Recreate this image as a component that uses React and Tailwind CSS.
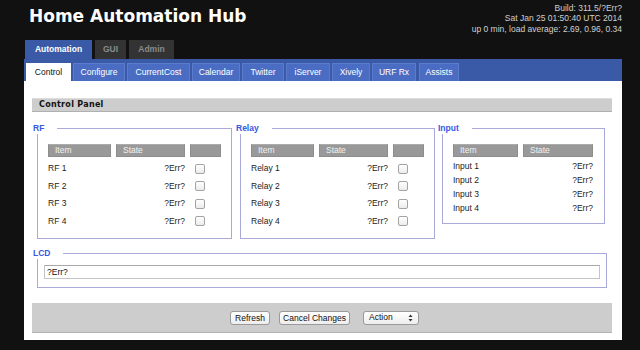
import React from "react";

const topTabs = [
  { label: "Automation", w: "w-[67px]", active: true },
  { label: "GUI", w: "w-[31px]" },
  { label: "Admin", w: "w-[45px]" },
];

const subTabs = [
  { label: "Control", w: "w-[45px]", active: true },
  { label: "Configure", w: "w-[52px]" },
  { label: "CurrentCost", w: "w-[63px]" },
  { label: "Calendar", w: "w-[48px]" },
  { label: "Twitter", w: "w-[42px]" },
  { label: "iServer", w: "w-[44px]" },
  { label: "Xively", w: "w-[38px]" },
  { label: "URF Rx", w: "w-[44px]" },
  { label: "Assists", w: "w-[40px]", ml: "ml-[1px]" },
];

const Checkbox = () => (
  <span className="block h-[10px] w-[10px] rounded-[2px] border border-[#a3a3a3] bg-gradient-to-b from-white to-[#ececec]" />
);

const HeadCell = ({ children }) => (
  <div className="h-[13px] border border-[#8d8d8d] border-t-[#ababab] bg-[#999] pl-[6px] leading-[11px] text-[#f2f2f2]">
    {children}
  </div>
);

// legend sits 5px left of the fieldset border; the offset also cancels the fieldset padding
const Legend = ({ children, ml = "-ml-[15px]" }) => (
  <legend className={`${ml} pr-[13px] text-[8.5px] font-bold leading-[11px] text-[#3658e4]`}>
    {children}
  </legend>
);

const SwitchBox = ({ title, prefix, w, ml }) => (
  <fieldset className={`${w} ${ml || ""} h-[116px] border border-[#a9a9da] px-[10px] pt-[10px]`}>
    <Legend>{title}</Legend>
    <div className="grid grid-cols-[63px_69px_31px] gap-x-[5px]">
      <HeadCell>Item</HeadCell>
      <HeadCell>State</HeadCell>
      <HeadCell />
    </div>
    <div className="mt-[3px]">
      {[1, 2, 3, 4].map((n) => (
        <div key={n} className="grid h-[17.5px] grid-cols-[63px_69px_31px] items-center gap-x-[5px]">
          <span>
            {prefix} {n}
          </span>
          <span className="text-right">?Err?</span>
          <span className="pl-[5px]">
            <Checkbox />
          </span>
        </div>
      ))}
    </div>
  </fieldset>
);

export default function App() {
  return (
    <div className="h-[350px] w-[640px] overflow-hidden bg-[#111] font-['Liberation_Sans',Arial,sans-serif] text-[8.5px] text-[#222]">
      <div className="ml-[24px] w-[598px]">
        <div className="flex h-[40px] justify-between">
          <h1 className="pl-[5px] pt-[6px] font-['DejaVu_Sans',sans-serif] text-[17px] font-bold leading-[20px] text-white">
            Home Automation Hub
          </h1>
          <div className="pt-[3px] text-right leading-[10.4px] text-[#d0d0d0]">
            <div>Build: 311.5/?Err?</div>
            <div>Sat Jan 25 01:50:40 UTC 2014</div>
            <div>up 0 min, load average: 2.69, 0.96, 0.34</div>
          </div>
        </div>

        <div className="flex h-[19px] gap-[3px] pl-[1px]">
          {topTabs.map((t) => (
            <div
              key={t.label}
              className={`${t.w} flex items-center justify-center font-bold ${
                t.active ? "bg-[#3a5aa8] text-white" : "bg-[#333] text-[#8a8a8a]"
              }`}
            >
              {t.label}
            </div>
          ))}
        </div>

        <div className="flex h-[22px] items-end gap-[2px] bg-[#3a5aa8] pl-[2px]">
          {subTabs.map((t) => (
            <div
              key={t.label}
              className={`${t.w} ${t.ml || ""} flex h-[18px] items-center justify-center ${
                t.active
                  ? "bg-white text-[#111]"
                  : "border border-b-0 border-[#5b7ccd] bg-[#4a6dc3] text-white"
              }`}
            >
              {t.label}
            </div>
          ))}
        </div>

        <div className="h-[259px] bg-white pl-[8px] pr-[10px] pt-[17px]">
          <div className="h-[14px] border-b border-t border-b-[#b0b0b0] border-t-[#dcdcdc] bg-[#cdcdcd] pl-[7px] font-['DejaVu_Sans',sans-serif] text-[8px] font-bold leading-[12px] tracking-[0.3px] text-[#111]">
            Control Panel
          </div>

          <div className="mt-[11px] flex items-start pl-[5px]">
            <SwitchBox title="RF" prefix="RF" w="w-[195px]" />
            <SwitchBox title="Relay" prefix="Relay" w="w-[193px]" ml="ml-[8px]" />
            <fieldset className="ml-[7px] h-[101px] w-[163px] border border-[#a9a9da] px-[10px] pt-[10px]">
              <Legend>Input</Legend>
              <div className="grid grid-cols-[65px_70px] gap-x-[5px]">
                <HeadCell>Item</HeadCell>
                <HeadCell>State</HeadCell>
              </div>
              <div className="mt-[2px]">
                {[1, 2, 3, 4].map((n) => (
                  <div key={n} className="grid h-[14.2px] grid-cols-[65px_70px] items-center gap-x-[5px]">
                    <span>Input {n}</span>
                    <span className="text-right">?Err?</span>
                  </div>
                ))}
              </div>
            </fieldset>
          </div>

          <fieldset className="ml-[5px] mt-[9px] h-[40px] w-[570px] border border-[#a9a9da] px-[6px] pt-[6px]">
            <Legend ml="-ml-[11px]">LCD</Legend>
            <input
              readOnly
              value="?Err?"
              className="block h-[14px] w-full border border-[#c4c4c4] border-t-[#a8a8a8] bg-white px-[2px] text-[8.5px] leading-[12px] text-[#111] outline-none"
            />
          </fieldset>

          <div className="mt-[15px] flex h-[30px] items-center justify-center border-b border-[#b3b3b3] bg-[#cdcdcd] pl-[5px]">
            <button className="h-[14px] w-[40px] rounded-[3px] border border-[#9a9a9a] bg-gradient-to-b from-white to-[#ededed] text-[8.5px] leading-[12px] text-[#111]">
              Refresh
            </button>
            <button className="ml-[9px] h-[14px] w-[71px] rounded-[3px] border border-[#9a9a9a] bg-gradient-to-b from-white to-[#ededed] text-[8.5px] leading-[12px] text-[#111]">
              Cancel Changes
            </button>
            <div className="ml-[13px] flex h-[14px] w-[56px] items-center justify-between rounded-[3px] border border-[#9a9a9a] bg-gradient-to-b from-white to-[#ededed] pl-[5px] pr-[5px] text-[#111]">
              <span>Action</span>
              <svg width="5" height="8" viewBox="0 0 5 8">
                <path d="M2.5 0.5 L4.5 3 L0.5 3 Z" fill="#333" />
                <path d="M2.5 7.5 L4.5 5 L0.5 5 Z" fill="#333" />
              </svg>
            </div>
          </div>
        </div>
      </div>
    </div>
  );
}
